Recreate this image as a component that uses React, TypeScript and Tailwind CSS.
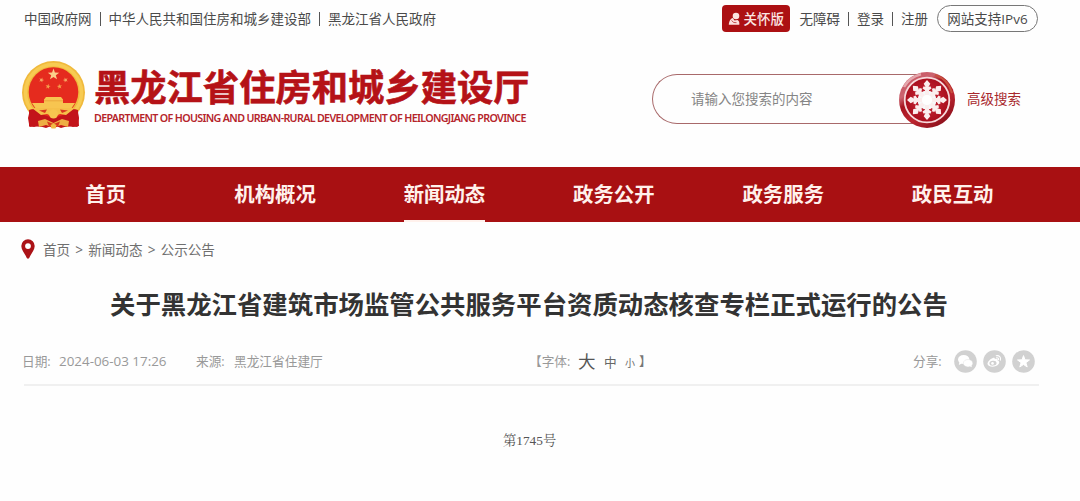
import React from 'react';

const sans = "font-['Open_Sans','Noto_Sans_CJK_SC',sans-serif]";

const navItems = ['首页', '机构概况', '新闻动态', '政务公开', '政务服务', '政民互动'];

const starPath = (cx: number, cy: number, r: number, turn = 0) =>
  Array.from({ length: 10 }, (_, i) => {
    const a = ((i * 36 - 90 + turn) * Math.PI) / 180;
    const k = i % 2 === 0 ? r : r * 0.4;
    return `${i === 0 ? 'M' : 'L'}${(cx + k * Math.cos(a)).toFixed(2)} ${(cy + k * Math.sin(a)).toFixed(2)}`;
  }).join('') + 'Z';

function Emblem() {
  return (
    <svg className="block h-[68px] w-[64px] shrink-0" viewBox="0 0 64 68">
      <path d="M9 44L6 57l1.500 9 6-1 5 1 7-2 6 3 6-3 7 2 5-1 6 1L57 57 54 44z" fill="#c3141a" />
      <circle cx="31.500" cy="31.500" r="31.500" fill="#f0b93c" />
      <circle cx="31.500" cy="31.500" r="28" fill="none" stroke="#f7cb52" strokeWidth="3.500" />
      <path d="M7 49Q14 46 31.500 52 49 46 56 49L57 65l-6 1-5-1-7 2-7.500-3L24 67l-7-2-5 1-5-1z" fill="#c3141a" />
      <circle cx="31.500" cy="31" r="24.800" fill="#e52b1e" />
      <path d={starPath(31.5, 13.500, 6)} fill="#fbd08a" />
      <path d={starPath(19.5, 19, 2.7, 20)} fill="#f5a562" />
      <path d={starPath(43.5, 19, 2.7, -20)} fill="#f5a562" />
      <path d={starPath(26, 25.500, 2.7, 10)} fill="#f5a04c" />
      <path d={starPath(37.500, 25.500, 2.7, -10)} fill="#f5a04c" />
      <path d="M22 38.500l2-2.500h15l2 2.500v3.500h12l-4 6H14l-4-6h12z" fill="#f7c550" />
      <path d="M22 39.800h19" stroke="#e89c38" strokeWidth=".7" />
      <path d="M10 47h43l-9 7-6-1-6.500 3-6.500-3-6 1z" fill="#f5c04a" />
      <path d="M17 49.500l8-1-2 3.500zM46 49.500l-8-1 2 3.500z" fill="#d8381f" />
      <circle cx="31.500" cy="53" r="4.500" fill="#f7c550" />
      <path d="M16 60l7-2 8.500 4 8.500-4 7 2-1 6-7-2-7.500 2.500L24 64l-7 2z" fill="#eeae44" />
      <path d="M25 60.500l6.500 2.500 6.500-2.500-2 5-4.500 1.500-4.500-1.500z" fill="#d9381d" />
      <path d="M28.500 64l3-1.500 3 1.500-1 3.500h-4z" fill="#f0bb45" />
    </svg>
  );
}

function SnowButton() {
  return (
    <svg className="absolute -right-[30px] -top-[4px] h-[58px] w-[58px]" viewBox="-29 -29 58 58">
      <defs>
        <linearGradient id="rim" x1="0.1" y1="0" x2="0.8" y2="1">
          <stop offset="0" stopColor="#c9505d" />
          <stop offset=".28" stopColor="#cb6470" />
          <stop offset=".4" stopColor="#a71420" />
          <stop offset=".65" stopColor="#bd2630" />
          <stop offset="1" stopColor="#850c18" />
        </linearGradient>
        <radialGradient id="disc">
          <stop offset="0" stopColor="#cf3040" />
          <stop offset="1" stopColor="#a90e1d" />
        </radialGradient>
      </defs>
      <circle r="28" fill="url(#rim)" />
      <path d="M-23-13A26.500 26.500 0 0 1-6-25.800" fill="none" stroke="#e4a6ac" strokeWidth="2.500" />
      <path d="M8-25A26 26 0 0 1 25-7" fill="none" stroke="#c8513f" strokeWidth="2" />
      <circle r="22.300" fill="url(#disc)" stroke="#f7d9db" strokeWidth="1.800" />
      <circle r="9.500" fill="#f4fafc" />
      {[0, 45, 90, 135, 180, 225, 270, 315].map((a) => (
        <g key={a} transform={`rotate(${a})`} fill="#fbeeee">
          <path d="M-2-5h4v-7h-4z" />
          <path d="M-4.500-11.500l1.200-2.300 1.800.8-1.800-3.300L0-20l3.300 3.700L1.500-13l1.800-.8 1.200 2.300L0-8.500z" />
        </g>
      ))}
      <circle r="5" fill="#fff" />
    </svg>
  );
}

function ShareIcon({ kind }: { kind: 'wechat' | 'weibo' | 'star' }) {
  return (
    <svg className="block h-[23px] w-[23px]" viewBox="0 0 23 23">
      <circle cx="11.500" cy="11.500" r="11.300" fill="#d1d1d1" />
      {kind === 'wechat' && (
        <g fill="#fff">
          <ellipse cx="9.700" cy="9.500" rx="5.700" ry="4.500" />
          <path d="M5.500 12l-.7 3 3-1.500z" />
          <ellipse cx="14" cy="13.200" rx="4.700" ry="3.700" stroke="#d9d9d9" strokeWidth=".4" />
          <path d="M15.500 16l2.300 1.300-.5-2.600z" />
        </g>
      )}
      {kind === 'weibo' && (
        <g>
          <path
            d="M9.800 8.100c.9-.5 2.200-.6 2 .9 2-.7 3.400-.3 2.800 1.400 1.800.5 2.100 2.200 1 3.700-2.500 3.500-10.200 3.200-11 .2-.5-2 2.700-5.200 5.200-6.200z"
            fill="#fff"
          />
          <ellipse cx="10" cy="13.200" rx="3.600" ry="2.400" fill="#d1d1d1" transform="rotate(-8 10 13.200)" />
          <circle cx="9.500" cy="13.400" r="1.300" fill="#fff" />
          <path d="M13.200 5.700c3-.6 5 1.500 4.200 4.500M13.500 7.800c1.500-.3 2.300.6 2 1.900" fill="none" stroke="#fff" strokeWidth="1.100" strokeLinecap="round" />
        </g>
      )}
      {kind === 'star' && <path d={starPath(11.5, 11.9, 6.3)} fill="#fff" stroke="#fff" strokeWidth="1" strokeLinejoin="round" />}
    </svg>
  );
}

function Bar() {
  return <span className="mx-[8px] h-[14px] w-px bg-[#555]" />;
}

export default function App() {
  return (
    <div className={`h-[501px] w-[1080px] overflow-hidden bg-[#fefefe] whitespace-nowrap ${sans}`}>
      <div className="flex h-[37px] items-center justify-between pl-[24px] pr-[42px] text-[13.5px] leading-[20px] text-[#4a4a4a]">
        <div className="flex items-center">
          <span>中国政府网</span>
          <Bar />
          <span>中华人民共和国住房和城乡建设部</span>
          <Bar />
          <span>黑龙江省人民政府</span>
        </div>
        <div className="flex items-center">
          <span className="mr-[10px] flex h-[27px] w-[68px] items-center rounded-[4px] bg-[#ac1013] pl-[6px] font-medium text-[#fbe6e3]">
            <svg className="mr-[3px] block h-[14px] w-[13px]" viewBox="0 0 13 14">
              <circle cx="8" cy="4" r="3.300" fill="#fbe3e0" />
              <path d="M.8 12.800C1 9.500 2.500 6.500 4.800 6L6.500 8.500 9.500 8q2.300 1.200 1.800 4.800z" fill="#fbe3e0" />
              <path d="M3.500 8.500l2.300 2 2.700.2" stroke="#ac1013" strokeWidth=".7" fill="none" />
            </svg>
            关怀版
          </span>
          <span>无障碍</span>
          <Bar />
          <span>登录</span>
          <Bar />
          <span>注册</span>
          <span className="ml-[9px] flex h-[27px] w-[101px] items-center justify-center rounded-full border border-[#777]">网站支持IPv6</span>
        </div>
      </div>

      <header className="flex h-[130px] items-start pl-[22px] pt-[24px]">
        <Emblem />
        <div className="ml-[8px] w-[436px]">
          <h1 className="h-[44px] pt-[4px] text-[36.3px] font-bold leading-[44px] text-[#b51217] [-webkit-text-stroke:0.6px_#b51217]">黑龙江省住房和城乡建设厅</h1>
          <p className="mt-[4px] font-['Noto_Sans',sans-serif] text-[10.7px] font-semibold leading-[18px] tracking-[-0.665px] text-[#b5242a]">
            DEPARTMENT OF HOUSING AND URBAN-RURAL DEVELOPMENT OF HEILONGJIANG PROVINCE
          </p>
        </div>
        <div className="relative ml-[122px] mt-[13px] flex h-[50px] w-[274px] items-center rounded-l-full border border-r-0 border-[#a8696a] pl-[38px] text-[13.5px] text-[#858585]">
          请输入您搜索的内容
          <SnowButton />
        </div>
        <span className="ml-[41px] mt-[28px] text-[13.5px] leading-[20px] text-[#a8282c]">高级搜索</span>
      </header>

      <nav className="flex h-[55px] bg-[#a81012] pl-[21px] text-[20.4px] font-bold text-[#fff1ec]">
        {navItems.map((label, i) => (
          <div key={label} className="flex w-[169.4px] justify-center">
            <span className={`h-[55px] leading-[55px] ${i === 2 ? 'border-b-2 border-[#fff1ec]' : ''}`}>{label}</span>
          </div>
        ))}
      </nav>

      <div className="flex h-[57px] items-center pl-[21px] text-[13.6px] text-[#6f6f6f]">
        <svg className="mr-[8px] -mt-[3px] block h-[20px] w-[14px]" viewBox="0 0 14 20">
          <path fillRule="evenodd" d="M7 .3a6.700 6.700 0 0 1 6.700 6.700C13.700 11 10 14.500 8.200 19q-1.200 1.500-2.400 0C4 14.500.3 11 .3 7A6.700 6.700 0 0 1 7 .3zM7 4.200a2.900 2.900 0 1 0 0 5.800 2.900 2.900 0 0 0 0-5.800z" fill="#ab1217" />
        </svg>
        <span>首页</span>
        <span className="w-[18px] text-center">&gt;</span>
        <span>新闻动态</span>
        <span className="w-[18px] text-center">&gt;</span>
        <span>公示公告</span>
      </div>

      <h2 className="h-[60px] pl-[110px] text-[25.4px] font-bold leading-[51px] text-[#333]">关于黑龙江省建筑市场监管公共服务平台资质动态核查专栏正式运行的公告</h2>

      <div className="ml-[24px] flex h-[47px] w-[1015px] items-center border-b-2 border-[#f0f0f0] text-[12.7px] text-[#999]">
        <div className="-ml-[2px] flex w-[174px] items-center">
          <span className="w-[37px]">日期:</span>
          <span className="text-[13.4px]">2024-06-03 17:26</span>
        </div>
        <div className="flex w-[333px]">
          <span className="w-[38px]">来源:</span>
          <span>黑龙江省住建厅</span>
        </div>
        <div className="flex w-[384px] items-center">
          <span className="w-[49px]">【字体:</span>
          <span className="w-[26px] text-[17.5px] text-[#555]">大</span>
          <span className="w-[21px] pt-[2px] text-[#666]">中</span>
          <span className="w-[14px] pt-[3px] text-[10px] text-[#666]">小</span>
          <span className="text-[#777]">】</span>
        </div>
        <div className="flex items-center">
          <span className="w-[41px]">分享:</span>
          <div className="flex gap-[6px]">
            <ShareIcon kind="wechat" />
            <ShareIcon kind="weibo" />
            <ShareIcon kind="star" />
          </div>
        </div>
      </div>

      <p className="pl-[503px] pt-[45px] font-['Liberation_Serif','Noto_Serif_CJK_SC','Noto_Sans_CJK_SC',serif] text-[13.3px] leading-[20px] text-[#555]">第1745号</p>
    </div>
  );
}
